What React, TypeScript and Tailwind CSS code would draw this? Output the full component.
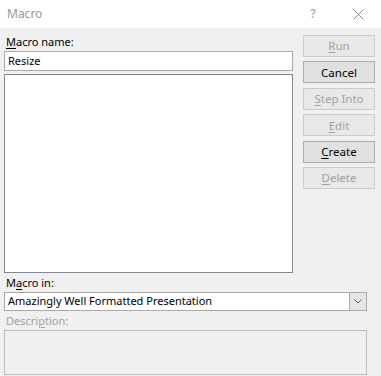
const font = "font-['Noto_Sans','Liberation_Sans',sans-serif]";

function Btn({ u, rest, disabled }: { u: string; rest: string; disabled?: boolean }) {
  return (
    <div
      className={
        "h-[22px] w-[72px] flex items-center justify-center text-[11.5px] border " +
        (disabled
          ? "border-[#cccccc] bg-[#e8e8e8] text-[#a2a2a2]"
          : "border-[#adadad] bg-[#e1e1e1] text-black")
      }
    >
      <span>
        <span className="underline underline-offset-2">{u}</span>
        {rest}
      </span>
    </div>
  );
}

export default function App() {
  return (
    <div className={"w-[381px] h-[376px] bg-[#f0f0f0] flex flex-col " + font}>
      <div className="h-[28px] bg-white flex items-center shrink-0">
        <span className="ml-[7px] text-[12px] text-[#999999]">Macro</span>
        <span className="ml-auto mr-[37px] text-[13px] text-[#999999]">?</span>
        <svg width="11" height="11" viewBox="0 0 11 11" className="mr-[17px]">
          <path d="M0.5 0.5 L10.5 10.5 M10.5 0.5 L0.5 10.5" stroke="#8a8a8a" strokeWidth="1" />
        </svg>
      </div>
      <div className="flex pl-[4px] pt-[5px]">
        <div className="w-[289px] flex flex-col">
          <div className="ml-[2px] h-[18px] text-[11px] text-black leading-[18px]">
            <span className="underline underline-offset-2">M</span>acro name:
          </div>
          <div className="h-[20px] border border-[#a9a9a9] bg-white pl-[3px] text-[11px] leading-[18px] text-black">
            Resize
          </div>
          <div className="mt-[3px] h-[199px] border border-[#828790] bg-white" />
        </div>
        <div className="ml-[10px] mt-[2px] flex flex-col gap-[4.4px]">
          <Btn u="R" rest="un" disabled />
          <Btn u="" rest="Cancel" />
          <Btn u="S" rest="tep Into" disabled />
          <Btn u="E" rest="dit" disabled />
          <Btn u="C" rest="reate" />
          <Btn u="D" rest="elete" disabled />
        </div>
      </div>
      <div className="pl-[4px] pr-[14px] flex flex-col">
        <div className="ml-[2px] mt-[1px] h-[18px] text-[11px] leading-[18px] text-black">
          M<span className="underline underline-offset-2">a</span>cro in:
        </div>
        <div className="h-[19px] border border-[#a9a9a9] bg-white flex items-center">
          <span className="pl-[3px] text-[11px] text-black">Amazingly Well Formatted Presentation</span>
          <div className="ml-auto w-[17px] h-full bg-[#e5e5e5] border-l border-[#a9a9a9] flex items-center justify-center">
            <svg width="8" height="5" viewBox="0 0 8 5">
              <path d="M0.5 0.5 L4 4 L7.5 0.5" fill="none" stroke="#606060" strokeWidth="1" />
            </svg>
          </div>
        </div>
        <div className="ml-[2px] mt-[1px] h-[18px] text-[11px] leading-[18px] text-[#a0a0a0]">
          Descri<span className="underline underline-offset-2">p</span>tion:
        </div>
        <div className="h-[45px] border border-[#bcbcbc] bg-[#f0f0f0]" />
      </div>
    </div>
  );
}
